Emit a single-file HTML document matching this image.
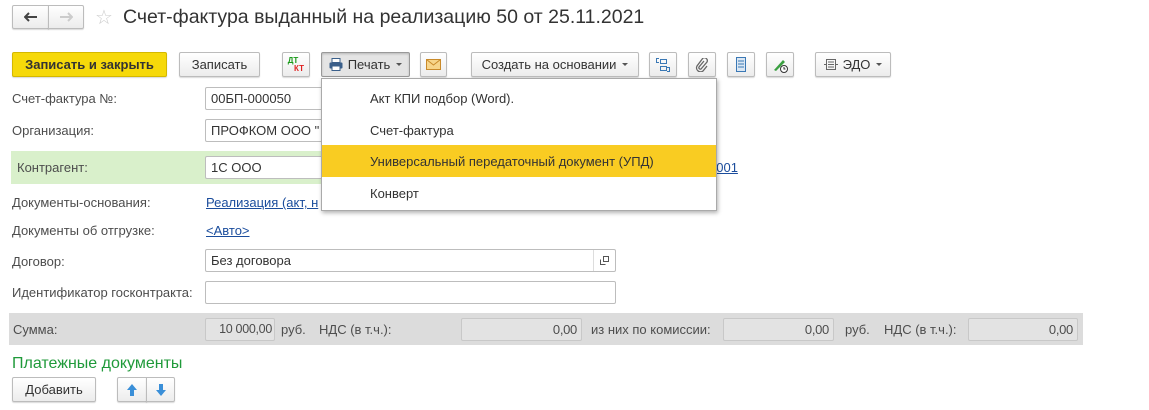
<!DOCTYPE html>
<html><head><meta charset="utf-8"><style>
*{box-sizing:border-box;margin:0;padding:0}
body{width:1149px;height:410px;background:#fff;font-family:"Liberation Sans",sans-serif;font-size:13px;color:#4d4d4d;position:relative;overflow:hidden}
.a{position:absolute;white-space:nowrap}
.btn{position:absolute;height:25px;border:1px solid #bcbcbc;border-radius:2px;background:linear-gradient(#fff,#ececec);box-shadow:0 1px 1px rgba(0,0,0,.15);color:#333;display:flex;align-items:center;justify-content:center}
.inp{position:absolute;height:23px;border:1px solid #bdbdbd;border-radius:2px;background:#fff;color:#333;padding-left:5px;line-height:21px;overflow:hidden;white-space:nowrap}
.lbl{position:absolute;white-space:nowrap;line-height:15px}
.lnk{color:#1a4c9c;text-decoration:underline}
.ginp{position:absolute;height:23px;border:1px solid #c8c8c8;border-radius:2px;background:#e3e3e3;text-align:right;padding-right:4px;line-height:21px;color:#4d4d4d;white-space:nowrap;letter-spacing:-0.3px}
.caret{display:inline-block;width:0;height:0;border-left:3px solid transparent;border-right:3px solid transparent;border-top:3px solid #555;margin-left:6px;vertical-align:middle}
</style></head><body>
<div class="btn" style="left:12px;top:5px;width:37px;height:24px;border-radius:2px 0 0 2px"><svg width="14" height="10"><path d="M1 5h12M5 1 1 5l4 4" fill="none" stroke="#444" stroke-width="2"/></svg></div>
<div class="btn" style="left:48px;top:5px;width:36px;height:24px;border-radius:0 2px 2px 0"><svg width="14" height="10"><path d="M1 5h12M9 1l4 4-4 4" fill="none" stroke="#ccc" stroke-width="2"/></svg></div>
<div class="a" style="left:95px;top:5px;font-size:20px;color:#ccc">☆</div>
<div class="a" style="left:123px;top:6px;font-size:19.5px;color:#333">Счет-фактура выданный на реализацию 50 от 25.11.2021</div>

<div class="btn" style="left:12px;top:52px;width:155px;background:#f6d90a;border-color:#d4b800;font-weight:bold;color:#333">Записать и закрыть</div>
<div class="btn" style="left:179px;top:52px;width:81px">Записать</div>
<div class="btn" style="left:282px;top:52px;width:28px;font-size:8px;font-weight:bold;line-height:8px;flex-direction:column"><span style="color:#1a9a1a;margin-left:-6px">ДТ</span><span style="color:#e02020;margin-left:6px">КТ</span></div>
<div class="btn" style="left:321px;top:52px;width:89px;background:#e4e4e4;border-color:#999;box-shadow:inset 0 1px 2px rgba(0,0,0,.2)"><svg width="14" height="13" viewBox="0 0 14 13" style="margin-right:5px"><rect x="3" y="0.5" width="8" height="4" fill="#fff" stroke="#3a5f8a"/><rect x="0.5" y="4.5" width="13" height="6" rx="1" fill="#3a5f8a"/><rect x="3" y="8" width="8" height="4.5" fill="#fff" stroke="#3a5f8a"/></svg>Печать<span class="caret"></span></div>
<div class="btn" style="left:420px;top:52px;width:27px"><svg width="15" height="11"><rect x=".5" y=".5" width="14" height="10" fill="#f7d58a" stroke="#c98a2a"/><path d="M.5 .5 7.5 6 14.5 .5" fill="none" stroke="#c98a2a"/></svg></div>
<div class="btn" style="left:471px;top:52px;width:168px">Создать на основании<span class="caret"></span></div>
<div class="btn" style="left:649px;top:52px;width:28px"><svg width="16" height="16" fill="none" stroke="#3a78b5"><path d="M4 1.5H1.5v4H4M12 10.5h2.5v4H12"/><rect x="5.5" y="2.5" width="6" height="4"/><rect x="5.5" y="9.5" width="6" height="4"/></svg></div>
<div class="btn" style="left:688px;top:52px;width:28px"><svg width="14" height="14" fill="none" stroke="#666" stroke-width="1.3"><path d="M9 3 4 9a1.5 1.5 0 0 0 2 2l6-7a3 3 0 0 0-4-4L2 8a4 4 0 0 0 6 5l4-5"/></svg></div>
<div class="btn" style="left:727px;top:52px;width:28px"><svg width="10" height="15"><rect x=".5" y=".5" width="9" height="14" fill="#dbe7f3" stroke="#3a78b5"/><path d="M2 4h6M2 7h6M2 10h6" stroke="#3a78b5"/></svg></div>
<div class="btn" style="left:766px;top:52px;width:28px"><svg width="16" height="16"><path d="M2 13 11 3l2 2-9 9z" fill="#3aa040"/><circle cx="12" cy="12" r="3.5" fill="#fff" stroke="#333"/><path d="M12 10v2h1.5" stroke="#333" fill="none"/></svg></div>
<div class="btn" style="left:815px;top:52px;width:76px"><svg width="14" height="13" fill="none" stroke="#666" style="margin-right:5px"><rect x="2.5" y="1.5" width="9" height="10"/><path d="M4 4h6M4 6.5h6M4 9h6M0 6.5h2M12 6.5h2"/></svg>ЭДО<span class="caret"></span></div>

<div class="lbl" style="left:12px;top:91px">Счет-фактура №:</div>
<div class="inp" style="left:205px;top:87px;width:130px">00БП-000050</div>
<div class="lbl" style="left:12px;top:123px">Организация:</div>
<div class="inp" style="left:205px;top:119px;width:130px">ПРОФКОМ ООО "</div>
<div class="a" style="left:11px;top:151px;width:320px;height:33px;background:#d9f0cb"></div>
<div class="lbl" style="left:17px;top:160px">Контрагент:</div>
<div class="inp" style="left:205px;top:156px;width:130px">1С ООО</div>
<div class="lbl lnk" style="left:709px;top:160px">1001</div>
<div class="lbl" style="left:12px;top:195px">Документы-основания:</div>
<div class="lbl lnk" style="left:206px;top:195px">Реализация (акт, н</div>
<div class="lbl" style="left:12px;top:223px">Документы об отгрузке:</div>
<div class="lbl lnk" style="left:206px;top:223px">&lt;Авто&gt;</div>
<div class="lbl" style="left:12px;top:254px">Договор:</div>
<div class="inp" style="left:205px;top:249px;width:411px">Без договора<span style="position:absolute;right:0;top:0;width:22px;height:21px;border-left:1px solid #ddd;display:flex;align-items:center;justify-content:center"><svg width="9" height="9" fill="none" stroke="#555"><rect x="3.5" y=".5" width="5" height="5"/><path d="M.5 3.5v5h5"/></svg></span></div>
<div class="lbl" style="left:12px;top:285px">Идентификатор госконтракта:</div>
<div class="inp" style="left:205px;top:281px;width:411px"></div>

<div class="a" style="left:9px;top:313px;width:1074px;height:32px;background:#dcdcdc"></div>
<div class="lbl" style="left:13px;top:322px">Сумма:</div>
<div class="ginp" style="left:205px;top:318px;width:70px;padding-right:2px;font-size:12.5px">10 000,00</div>
<div class="lbl" style="left:281px;top:322px">руб.</div>
<div class="lbl" style="left:319px;top:322px">НДС (в т.ч.):</div>
<div class="ginp" style="left:461px;top:318px;width:121px">0,00</div>
<div class="lbl" style="left:591px;top:322px">из них по комиссии:</div>
<div class="ginp" style="left:723px;top:318px;width:111px">0,00</div>
<div class="lbl" style="left:845px;top:322px">руб.</div>
<div class="lbl" style="left:884px;top:322px">НДС (в т.ч.):</div>
<div class="ginp" style="left:968px;top:318px;width:110px">0,00</div>

<div class="lbl" style="left:12px;top:355px;font-size:16px;color:#1f9a3a;line-height:18px">Платежные документы</div>
<div class="btn" style="left:12px;top:377px;width:84px">Добавить</div>
<div class="btn" style="left:117px;top:377px;width:30px;border-radius:2px 0 0 2px"><svg width="10" height="12"><path d="M5 0 10 6H7v6H3V6H0z" fill="#3a8fd8"/></svg></div>
<div class="btn" style="left:146px;top:377px;width:29px;border-radius:0 2px 2px 0"><svg width="10" height="12"><path d="M5 12 10 6H7V0H3v6H0z" fill="#3a8fd8"/></svg></div>

<div class="a" style="left:321px;top:78px;width:396px;height:133px;background:#fff;border:1px solid #aaa;box-shadow:1px 2px 4px rgba(0,0,0,.3)">
<div class="a" style="left:48px;top:12px;color:#333">Акт КПИ подбор (Word).</div>
<div class="a" style="left:48px;top:44px;color:#333">Счет-фактура</div>
<div class="a" style="left:0;top:66px;width:394px;height:32px;background:#f9cc22"></div>
<div class="a" style="left:48px;top:75px;color:#333">Универсальный передаточный документ (УПД)</div>
<div class="a" style="left:48px;top:107px;color:#333">Конверт</div>
</div>
</body></html>
